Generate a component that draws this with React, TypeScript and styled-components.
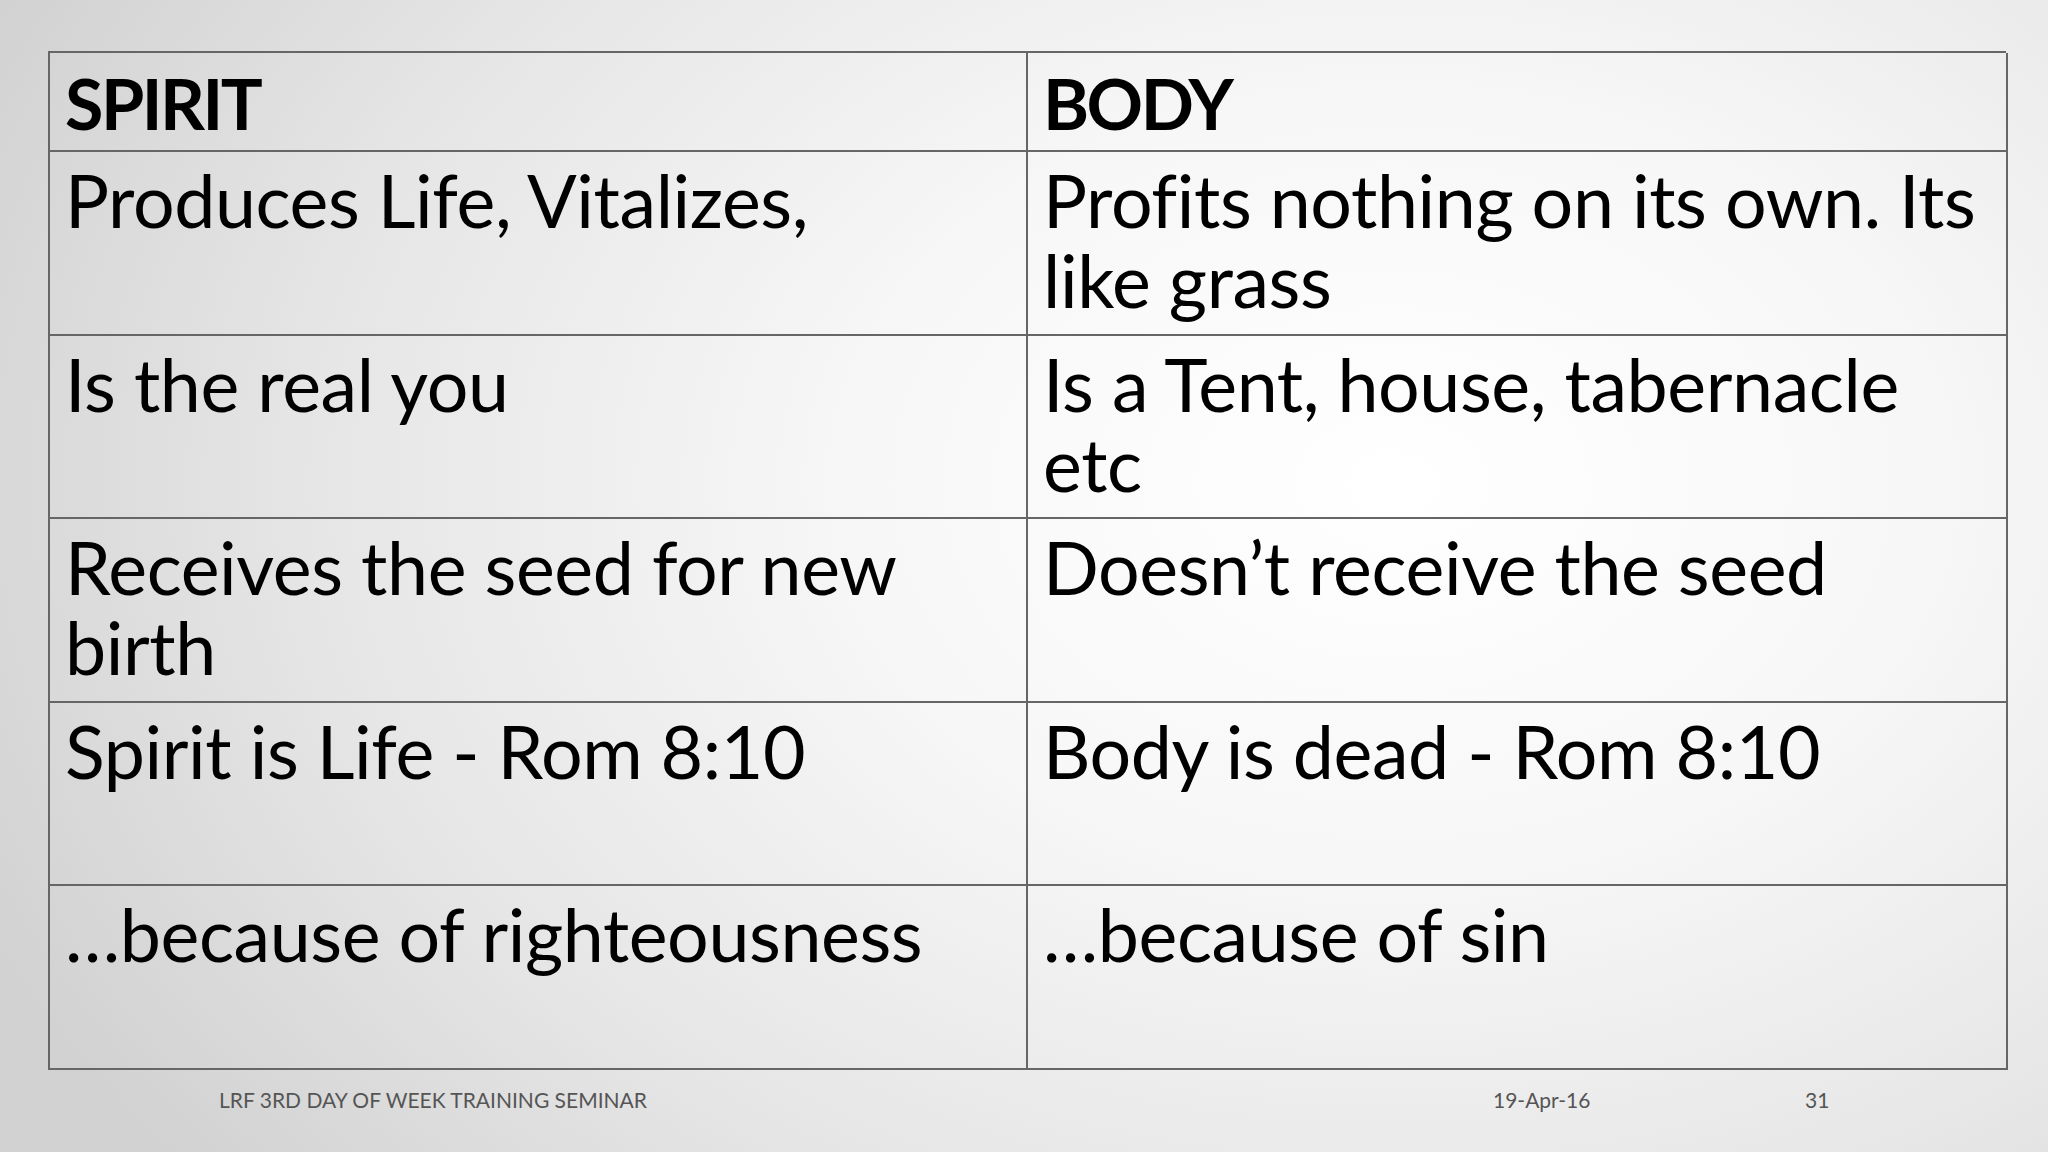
import React from "react";
import styled, { createGlobalStyle } from "styled-components";

const rows = [
  { spirit: "Produces Life, Vitalizes,", body: "Profits nothing on its own. Its like grass" },
  { spirit: "Is the real you", body: "Is a Tent, house, tabernacle etc" },
  { spirit: "Receives the seed for new birth", body: "Doesn\u2019t receive the seed" },
  { spirit: "Spirit is Life - Rom 8:10", body: "Body is dead - Rom 8:10" },
  { spirit: "\u2026because of righteousness", body: "\u2026because of sin" },
];

const GlobalStyle = createGlobalStyle`
  html, body {
    margin: 0;
    padding: 0;
  }
  body {
    font-family: Lato, "Liberation Sans", sans-serif;
    color: #000;
  }
`;

const Slide = styled.div`
  width: 2048px;
  height: 1152px;
  box-sizing: border-box;
  padding: 51px 42px 0 48px;
  background: radial-gradient(
    ellipse 75% 95% at 68% 42%,
    #ffffff 0%,
    #f7f7f7 35%,
    #e6e6e6 70%,
    #d2d2d2 100%
  );
  display: flex;
  flex-direction: column;
`;

const Table = styled.div`
  display: grid;
  grid-template-columns: 978px 980px;
  grid-template-rows: 99px repeat(5, 183.6px);
  border-top: 2px solid #666;
  border-left: 2px solid #666;
  width: 1958px;
  box-sizing: border-box;
`;

const Cell = styled.div<{ $head?: boolean }>`
  box-sizing: border-box;
  border-right: 2px solid #666;
  border-bottom: 2px solid #666;
  padding: ${(p) => (p.$head ? "10px 4px 0 15px" : "8px 4px 0 15px")};
  font-size: ${(p) => (p.$head ? "70px" : "73.5px")};
  font-weight: ${(p) => (p.$head ? 700 : 400)};
  line-height: 80px;
  letter-spacing: ${(p) => (p.$head ? "-2.5px" : "-0.4px")};
  overflow: hidden;
`;

const Footer = styled.div`
  display: flex;
  align-items: center;
  margin-top: 17px;
  font-size: 21px;
  color: #555;
`;

const FooterTitle = styled.span`
  margin-left: 171px;
  width: 1274px;
`;

const FooterDate = styled.span`
  width: 312px;
`;

const App: React.FC = () => {
  return (
    <>
      <GlobalStyle />
      <Slide>
        <Table>
          <Cell $head>SPIRIT</Cell>
          <Cell $head>BODY</Cell>
          {rows.map((r) => (
            <React.Fragment key={r.spirit}>
              <Cell>{r.spirit}</Cell>
              <Cell>{r.body}</Cell>
            </React.Fragment>
          ))}
        </Table>
        <Footer>
          <FooterTitle>LRF 3RD DAY OF WEEK TRAINING SEMINAR</FooterTitle>
          <FooterDate>19-Apr-16</FooterDate>
          <span>31</span>
        </Footer>
      </Slide>
    </>
  );
};

export default App;
